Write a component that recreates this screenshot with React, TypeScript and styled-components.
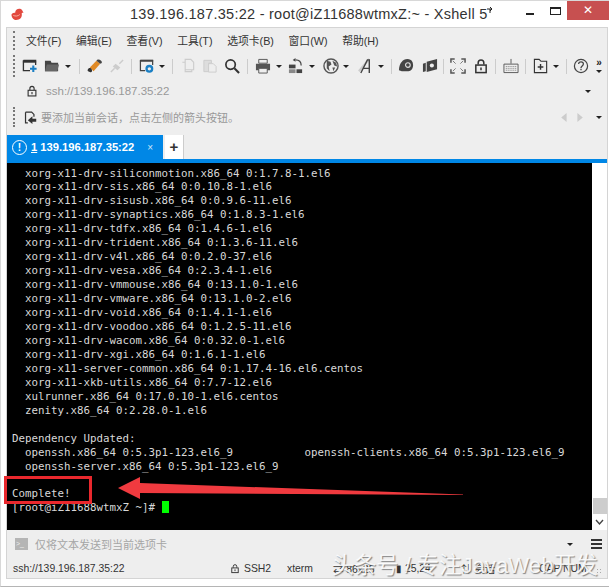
import React from "react";
import styled, { createGlobalStyle } from "styled-components";

const GlobalStyle = createGlobalStyle`
  html, body {
    margin: 0;
    padding: 0;
    background: #fff;
  }
  body {
    width: 612px;
    height: 587px;
    overflow: hidden;
    font-family: "Liberation Sans", "Noto Sans CJK SC", sans-serif;
  }
`;

const Window = styled.div`
  position: relative;
  width: 609px;
  height: 587px;
  background: #fff;
  border-top: 1px solid #d8d8d8;
  border-left: 1px solid #d8d8d8;
  border-bottom: 1px solid #b5b5b5;
  box-sizing: border-box;
  overflow: hidden;
`;

const TitleBar = styled.div`
  display: flex;
  align-items: flex-start;
  height: 26px;
  padding-left: 9px;
`;

const AppLogo = styled.svg`
  width: 15px;
  height: 13px;
  margin-top: 7px;
  flex: none;
`;

const TitleText = styled.div`
  margin-left: 105px;
  width: 396px;
  font-size: 14.5px;
  letter-spacing: 0.26px;
  line-height: 27px;
  color: #333;
  white-space: nowrap;
`;

const TitleMark = styled.svg`
  width: 6px;
  height: 6px;
  margin-left: -1px;
  vertical-align: 6px;
`;

const WinButtons = styled.div`
  display: flex;
  align-items: flex-start;
`;

const MinButton = styled.div`
  width: 8px;
  height: 2px;
  margin: 12px 16px 0 0;
  background: #222;
`;

const MaxButton = styled.div`
  width: 9px;
  height: 5px;
  margin: 6px 6px 0 0;
  border: 1px solid #222;
  border-top-width: 2px;
`;

const CloseButton = styled.div`
  width: 42px;
  height: 19px;
  background: #c75050;
  color: #fff;
  font-size: 12px;
  line-height: 19px;
  text-align: center;
`;

const Body = styled.div`
  margin-left: 5px;
  width: 602px;
  height: 552px;
  border: 1px solid #d4d4d4;
  background: #eee;
  box-sizing: border-box;
`;

const Grip = styled.span<{ $h: number; $mr: number }>`
  flex: none;
  width: 0;
  height: ${(p) => p.$h}px;
  border-left: 2px dotted #777;
  margin-right: ${(p) => p.$mr}px;
`;

const MenuBar = styled.div`
  display: flex;
  align-items: center;
  height: 24px;
  padding-left: 6px;
  font-size: 10.8px;
  color: #333;
`;

const MenuItem = styled.span`
  white-space: nowrap;
  margin-right: 14.6px;
`;

const ToolBar = styled.div`
  display: flex;
  align-items: center;
  height: 28px;
  padding-left: 6px;
`;

const ToolIcon = styled.svg<{ $ml?: number }>`
  width: 16px;
  height: 16px;
  flex: none;
  margin-left: ${(p) => p.$ml ?? 6}px;
`;

const SmallIcon = styled.svg<{ $w: number; $h: number }>`
  width: ${(p) => p.$w}px;
  height: ${(p) => p.$h}px;
  flex: none;
`;

const Caret = styled.span<{ $ml?: number }>`
  flex: none;
  width: 0;
  height: 0;
  border-left: 3px solid transparent;
  border-right: 3px solid transparent;
  border-top: 3px solid #222;
  margin-left: ${(p) => p.$ml ?? 0}px;
`;

const Sep = styled.span<{ $ml?: number }>`
  flex: none;
  width: 1px;
  height: 15px;
  background: #ccc;
  margin-left: ${(p) => p.$ml ?? 7}px;
`;

const More = styled.div`
  display: flex;
  flex-direction: column;
  align-items: center;
  gap: 3px;
  margin-left: 7px;
  font-size: 10px;
  line-height: 8px;
  font-weight: 700;
  color: #222;
`;

const AddressBar = styled.div`
  display: flex;
  align-items: center;
  height: 22px;
  padding-left: 19px;
  font-size: 11.5px;
  color: #999;
`;

const AddressText = styled.span`
  margin-left: 8px;
  width: 539px;
`;

const HintBar = styled.div`
  display: flex;
  align-items: center;
  height: 30px;
  padding-left: 6px;
  font-size: 11px;
  color: #999;
`;

const HintText = styled.span`
  margin-left: 4px;
  width: 520px;
  white-space: nowrap;
`;

const TabStrip = styled.div`
  display: flex;
  align-items: flex-end;
  height: 24px;
  margin-top: 3px;
  border-bottom: 4px solid #0087e6;
`;

const ActiveTab = styled.div`
  display: flex;
  align-items: center;
  width: 156px;
  height: 24px;
  padding-left: 5px;
  box-sizing: border-box;
  background: #0087e6;
  color: #fff;
  font-size: 11.2px;
  font-weight: 700;
  white-space: nowrap;
`;

const AlertBadge = styled.span`
  width: 13px;
  height: 13px;
  border: 1px solid #fff;
  border-radius: 50%;
  margin-right: 4px;
  font-size: 10px;
  line-height: 13px;
  text-align: center;
  flex: none;
`;

const TabClose = styled.span`
  margin-left: 13px;
  font-weight: 400;
  font-size: 10px;
  color: #cfe6f8;
`;

const AddTab = styled.div`
  width: 18px;
  height: 24px;
  margin-left: 2px;
  background: #fff;
  border-right: 1px solid #ccc;
  font-size: 15px;
  font-weight: 700;
  line-height: 23px;
  text-align: center;
  color: #333;
`;

const TerminalRow = styled.div`
  display: flex;
  height: 367px;
`;

const Terminal = styled.pre`
  width: 585px;
  margin: 0;
  padding: 3.5px 0 0 5px;
  box-sizing: border-box;
  background: #000;
  color: #d8d8d8;
  font-family: "DejaVu Sans Mono", "Liberation Mono", monospace;
  font-size: 10.8px;
  line-height: 13.95px;
  overflow: hidden;
`;

const Cursor = styled.span`
  display: inline-block;
  width: 7px;
  height: 12px;
  vertical-align: -2px;
  background: #00ff00;
`;

const ScrollTrack = styled.div`
  display: flex;
  flex-direction: column;
  justify-content: flex-end;
  align-items: center;
  width: 15px;
  background: #fff;
`;

const ScrollThumb = styled.div`
  width: 14px;
  height: 16px;
  background: #cdcdcd;
`;

const ScrollArrow = styled.svg`
  width: 9px;
  height: 7px;
  margin: 5px 0 4px;
`;

const ComposeBar = styled.div`
  display: flex;
  align-items: center;
  height: 28px;
  padding-left: 8px;
  font-size: 11px;
  color: #a5a5a5;
`;

const ComposeIcon = styled.div`
  width: 13px;
  height: 12px;
  background: #b5b5b5;
  margin-right: 7px;
  color: #eee;
  font-size: 7px;
  line-height: 12px;
  padding-left: 1px;
  box-sizing: border-box;
`;

const ComposeText = styled.span`
  width: 532px;
`;

const Burger = styled.div`
  position: relative;
  width: 11px;
  height: 10px;
  margin-left: 18px;
  border-top: 2px solid #333;
  border-bottom: 2px solid #333;
  box-sizing: border-box;
  &::after {
    content: "";
    position: absolute;
    left: 0;
    right: 0;
    top: 2px;
    height: 2px;
    background: #333;
  }
`;

const StatusBar = styled.div`
  display: flex;
  align-items: center;
  height: 20px;
  padding-left: 6px;
  font-size: 10.4px;
  color: #333;
  white-space: nowrap;
`;

const StatusCell = styled.span<{ $w: number }>`
  display: flex;
  align-items: center;
  gap: 4px;
  width: ${(p) => p.$w}px;
  flex: none;
`;

const SizeGrip = styled.span`
  flex: none;
  width: 7px;
  height: 7px;
  margin: 6px 0 0 5px;
  background-image: radial-gradient(#aaa 1px, transparent 1px);
  background-size: 3px 3px;
`;

const WatermarkText = styled.div`
  position: absolute;
  left: 331px;
  top: 552px;
  font-size: 22.2px;
  line-height: 26px;
  white-space: nowrap;
  color: rgba(255, 255, 255, 0.88);
  text-shadow: 1px 1px 1px rgba(90, 90, 90, 0.7);
`;

const CalloutBox = styled.div`
  position: absolute;
  left: 2.5px;
  top: 475px;
  width: 88.5px;
  height: 28px;
  border: 3px solid #e9282d;
  box-sizing: border-box;
`;

const CalloutArrow = styled.svg`
  position: absolute;
  left: 116px;
  top: 476px;
  width: 348px;
  height: 24px;
`;

const lines = [
  "  xorg-x11-drv-siliconmotion.x86_64 0:1.7.8-1.el6",
  "  xorg-x11-drv-sis.x86_64 0:0.10.8-1.el6",
  "  xorg-x11-drv-sisusb.x86_64 0:0.9.6-11.el6",
  "  xorg-x11-drv-synaptics.x86_64 0:1.8.3-1.el6",
  "  xorg-x11-drv-tdfx.x86_64 0:1.4.6-1.el6",
  "  xorg-x11-drv-trident.x86_64 0:1.3.6-11.el6",
  "  xorg-x11-drv-v4l.x86_64 0:0.2.0-37.el6",
  "  xorg-x11-drv-vesa.x86_64 0:2.3.4-1.el6",
  "  xorg-x11-drv-vmmouse.x86_64 0:13.1.0-1.el6",
  "  xorg-x11-drv-vmware.x86_64 0:13.1.0-2.el6",
  "  xorg-x11-drv-void.x86_64 0:1.4.1-1.el6",
  "  xorg-x11-drv-voodoo.x86_64 0:1.2.5-11.el6",
  "  xorg-x11-drv-wacom.x86_64 0:0.32.0-1.el6",
  "  xorg-x11-drv-xgi.x86_64 0:1.6.1-1.el6",
  "  xorg-x11-server-common.x86_64 0:1.17.4-16.el6.centos",
  "  xorg-x11-xkb-utils.x86_64 0:7.7-12.el6",
  "  xulrunner.x86_64 0:17.0.10-1.el6.centos",
  "  zenity.x86_64 0:2.28.0-1.el6",
  "",
  "Dependency Updated:",
  "  openssh.x86_64 0:5.3p1-123.el6_9           openssh-clients.x86_64 0:5.3p1-123.el6_9",
  "  openssh-server.x86_64 0:5.3p1-123.el6_9",
  "",
  "Complete!",
  "[root@iZ11688wtmxZ ~]# ",
];

const menus = ["文件(F)", "编辑(E)", "查看(V)", "工具(T)", "选项卡(B)", "窗口(W)", "帮助(H)"];

const LockShape = () => (
  <>
    <rect x="3" y="7.5" width="11" height="8" fill="none" stroke="#333" strokeWidth="1.6" />
    <path d="M5.5 7V5a3 3 0 0 1 6 0v2" fill="none" stroke="#333" strokeWidth="1.6" />
    <path d="M8.5 10v3" stroke="#333" strokeWidth="1.6" />
  </>
);

export default function App() {
  return (
    <>
      <GlobalStyle />
      <Window>
        <TitleBar>
          <AppLogo viewBox="0 0 15 14">
            <path d="M1 7c1-2 3-2 4-2 0-3 3-5 6-4 2 1 2 3 3 4-1 0-2 0-2 1 1 4-2 7-6 7C3 13 1 10 1 7z" fill="#e2493f" />
            <path d="M3 8c2 1 5 1 7-1" stroke="#f7b5a8" fill="none" />
          </AppLogo>
          <TitleText>
            139.196.187.35:22 - root@iZ11688wtmxZ:~ - Xshell 5
            <TitleMark viewBox="0 0 6 6">
              <path d="M0 2h5M3 0l2 2-2 2M3 2v4" fill="none" stroke="#222" strokeWidth="1" />
            </TitleMark>
          </TitleText>
          <WinButtons>
            <MinButton />
            <MaxButton />
            <CloseButton>✕</CloseButton>
          </WinButtons>
        </TitleBar>
        <Body>
          <MenuBar>
            <Grip $h={19} $mr={11} />
            {menus.map((m) => (
              <MenuItem key={m}>{m}</MenuItem>
            ))}
          </MenuBar>
          <ToolBar>
            <Grip $h={22} $mr={0} />
            <ToolIcon viewBox="0 0 17 17" $ml={7}>
              <path d="M1.5 2.5h13v5M1.5 2.5v11h7" fill="none" stroke="#333" strokeWidth="1.4" />
              <path d="M1 3h14v2H1z" fill="#333" />
              <path d="M12 8v7M8.5 11.5h7" stroke="#1a7fc4" strokeWidth="2.2" />
            </ToolIcon>
            <ToolIcon viewBox="0 0 17 17">
              <path d="M1 3h6l1 2h7v9H1z" fill="#444" />
              <path d="M3 7h13l-2 7H1z" fill="#666" />
            </ToolIcon>
            <Caret $ml={5} />
            <Sep $ml={8} />
            <ToolIcon viewBox="0 0 17 17" $ml={7}>
              <path d="M3 10l7-7 4 3-7 8z" fill="#e08a25" />
              <path d="M1 12c1-2 3-2 4 0s0 4-2 3-3-1-2-3z" fill="#333" />
              <path d="M10 3c1-2 3-2 5 0s0 3-1 3z" fill="#444" />
            </ToolIcon>
            <ToolIcon viewBox="0 0 17 17">
              <path d="M2 15l4-4M11 6l4-4" stroke="#ccc" strokeWidth="1.5" />
              <path d="M4 9l3-3 5 4-3 3z" fill="#ccc" />
            </ToolIcon>
            <Sep $ml={6} />
            <ToolIcon viewBox="0 0 17 17" $ml={7}>
              <path d="M1.5 2.5h13v5M1.5 2.5v11h5" fill="none" stroke="#444" strokeWidth="1.3" />
              <path d="M1 2h14v2H1z" fill="#444" />
              <circle cx="11" cy="11.5" r="3" fill="none" stroke="#1a7fc4" strokeWidth="2.4" />
            </ToolIcon>
            <Caret $ml={4} />
            <Sep />
            <ToolIcon viewBox="0 0 17 17" $ml={7}>
              <path d="M5.5 1.5h6l3 3v8h-9z M2.5 4.5h3v10h7v-2" fill="none" stroke="#ccc" strokeWidth="1.2" />
            </ToolIcon>
            <ToolIcon viewBox="0 0 17 17">
              <path d="M2 2.5h8v3h-3v9H2z" fill="#ddd" stroke="#ccc" />
              <path d="M7 6h5l3 3v6H7z" fill="#eee" stroke="#ccc" />
            </ToolIcon>
            <ToolIcon viewBox="0 0 17 17">
              <circle cx="7" cy="7" r="5" fill="none" stroke="#333" strokeWidth="1.8" />
              <path d="M11 11l5 5" stroke="#333" strokeWidth="2.2" />
            </ToolIcon>
            <Sep />
            <ToolIcon viewBox="0 0 17 17" $ml={7}>
              <path d="M4 1.5h9v4H4z" fill="none" stroke="#555" />
              <path d="M1 6h15v7h-3v-2H4v2H1z" fill="#555" />
              <path d="M4 11h9v5H4z" fill="none" stroke="#555" />
            </ToolIcon>
            <Caret $ml={5} />
            <ToolIcon viewBox="0 0 17 17">
              <path d="M1 7h7v4H1z" fill="#444" />
              <path d="M1 12h7v4H1z" fill="#888" />
              <path d="M9 12h6v4H9z" fill="#444" />
              <path d="M8 2c4 0 6 2 6 6" fill="none" stroke="#444" strokeWidth="1.3" />
              <path d="M8 0v4l-3-2z" fill="#444" />
            </ToolIcon>
            <Caret $ml={5} />
            <ToolIcon viewBox="0 0 17 17" $ml={8}>
              <circle cx="8.5" cy="8.5" r="7.5" fill="#eee" stroke="#555" strokeWidth="1.5" />
              <path d="M4 3l4 1 1 3-3 2 1 5-3-3zM10 3l4 2 1 4-3-1zM10 10l3 0-2 4z" fill="#555" />
            </ToolIcon>
            <Caret $ml={4} />
            <ToolIcon viewBox="0 0 17 17" $ml={9}>
              <path d="M1 14L12 1" stroke="#ccc" strokeWidth="2.5" />
              <path d="M3 16l7-14h2v14M6 11h6" fill="none" stroke="#444" strokeWidth="1.5" />
            </ToolIcon>
            <Caret $ml={4} />
            <Sep />
            <ToolIcon viewBox="0 0 17 17">
              <path d="M1 13c0-7 4-12 9-12s6 4 6 7-2 6-5 6H4z" fill="#444" />
              <circle cx="10.5" cy="7.5" r="2.5" fill="none" stroke="#ddd" strokeWidth="1.2" />
            </ToolIcon>
            <ToolIcon viewBox="0 0 17 17" $ml={8}>
              <path d="M1 6l3-1v9l-3 1zM5 4l11-3v11L5 15z" fill="#444" />
              <circle cx="10.5" cy="8" r="2.2" fill="#eee" />
            </ToolIcon>
            <Sep $ml={5} />
            <ToolIcon viewBox="0 0 17 17">
              <path d="M1 5V1h4M12 1h4v4M16 12v4h-4M5 16H1v-4" fill="none" stroke="#555" strokeWidth="1.6" />
              <path d="M3 3l3 3M14 3l-3 3M3 14l3-3M14 14l-3-3" stroke="#777" />
            </ToolIcon>
            <ToolIcon viewBox="0 0 17 17" $ml={7}>
              <LockShape />
            </ToolIcon>
            <Sep $ml={6} />
            <ToolIcon viewBox="0 0 17 17" $ml={7}>
              <path d="M1 6.5h15v9H1zM8.5 6V1" fill="none" stroke="#555" />
              <path d="M3 9h11M3 11h11M3 13h11" stroke="#777" strokeDasharray="1 1" />
            </ToolIcon>
            <Sep $ml={6} />
            <ToolIcon viewBox="0 0 17 17" $ml={7}>
              <path d="M1.5 1.5h5l2 2h6v12h-13z" fill="none" stroke="#333" strokeWidth="1.2" />
              <path d="M8 6.5v6M5 9.5h6" stroke="#333" strokeWidth="1.5" />
            </ToolIcon>
            <Caret $ml={4} />
            <Sep />
            <ToolIcon viewBox="0 0 17 17">
              <circle cx="8.5" cy="8.5" r="7" fill="none" stroke="#444" strokeWidth="1.3" />
              <path d="M6 6.5c0-3.5 5.5-3 5 0 0 2-2.5 2-2.5 4M8.5 11.5v1.6" fill="none" stroke="#444" strokeWidth="1.4" />
            </ToolIcon>
            <More>
              <span>»</span>
              <Caret />
            </More>
          </ToolBar>
          <AddressBar>
            <SmallIcon viewBox="0 0 17 17" $w={12} $h={12}>
              <LockShape />
            </SmallIcon>
            <AddressText>ssh://139.196.187.35:22</AddressText>
            <Caret />
          </AddressBar>
          <HintBar>
            <Grip $h={20} $mr={9} />
            <SmallIcon viewBox="0 0 17 17" $w={13} $h={13}>
              <path d="M2 1.5h8l3 3v3M2 1.5v14h3" fill="none" stroke="#333" strokeWidth="1.6" />
              <path d="M5 12l6-5v3h5v4h-5v3z" fill="#333" />
            </SmallIcon>
            <HintText>要添加当前会话，点击左侧的箭头按钮。</HintText>
            <SmallIcon viewBox="0 0 24 10" $w={22} $h={9}>
              <path d="M6 0v10L0 5zM18 0v10l6-5z" fill="#ccc" />
            </SmallIcon>
            <Caret $ml={13} />
          </HintBar>
          <TabStrip>
            <ActiveTab>
              <AlertBadge>!</AlertBadge>
              <u>1</u>&nbsp;139.196.187.35:22
              <TabClose>×</TabClose>
            </ActiveTab>
            <AddTab>+</AddTab>
          </TabStrip>
          <TerminalRow>
            <Terminal>
              {lines.join("\n")}
              <Cursor />
            </Terminal>
            <ScrollTrack>
              <ScrollThumb />
              <ScrollArrow viewBox="0 0 9 7">
                <path d="M1 1l3.5 4L8 1" fill="none" stroke="#444" strokeWidth="1.4" />
              </ScrollArrow>
            </ScrollTrack>
          </TerminalRow>
          <ComposeBar>
            <ComposeIcon>&gt;_</ComposeIcon>
            <ComposeText>仅将文本发送到当前选项卡</ComposeText>
            <Caret />
            <Burger />
          </ComposeBar>
          <StatusBar>
            <StatusCell $w={217}>ssh://139.196.187.35:22</StatusCell>
            <StatusCell $w={57}>
              <SmallIcon viewBox="0 0 17 17" $w={10} $h={11}>
                <LockShape />
              </SmallIcon>
              SSH2
            </StatusCell>
            <StatusCell $w={46}>xterm</StatusCell>
            <StatusCell $w={63}>⇄ 86x25</StatusCell>
            <StatusCell $w={65}>▮ 25,24</StatusCell>
            <StatusCell $w={78}>⇅ 会话</StatusCell>
            <StatusCell $w={52}>CAP NUM</StatusCell>
            <SizeGrip />
          </StatusBar>
        </Body>
        <CalloutBox />
        <CalloutArrow viewBox="0 0 348 24">
          <path d="M1 11L23 0v6l323 11.5v.6L23 16v6z" fill="#f03a3f" />
        </CalloutArrow>
        <WatermarkText>头条号 / 专注JavaWeb开发</WatermarkText>
      </Window>
    </>
  );
}
